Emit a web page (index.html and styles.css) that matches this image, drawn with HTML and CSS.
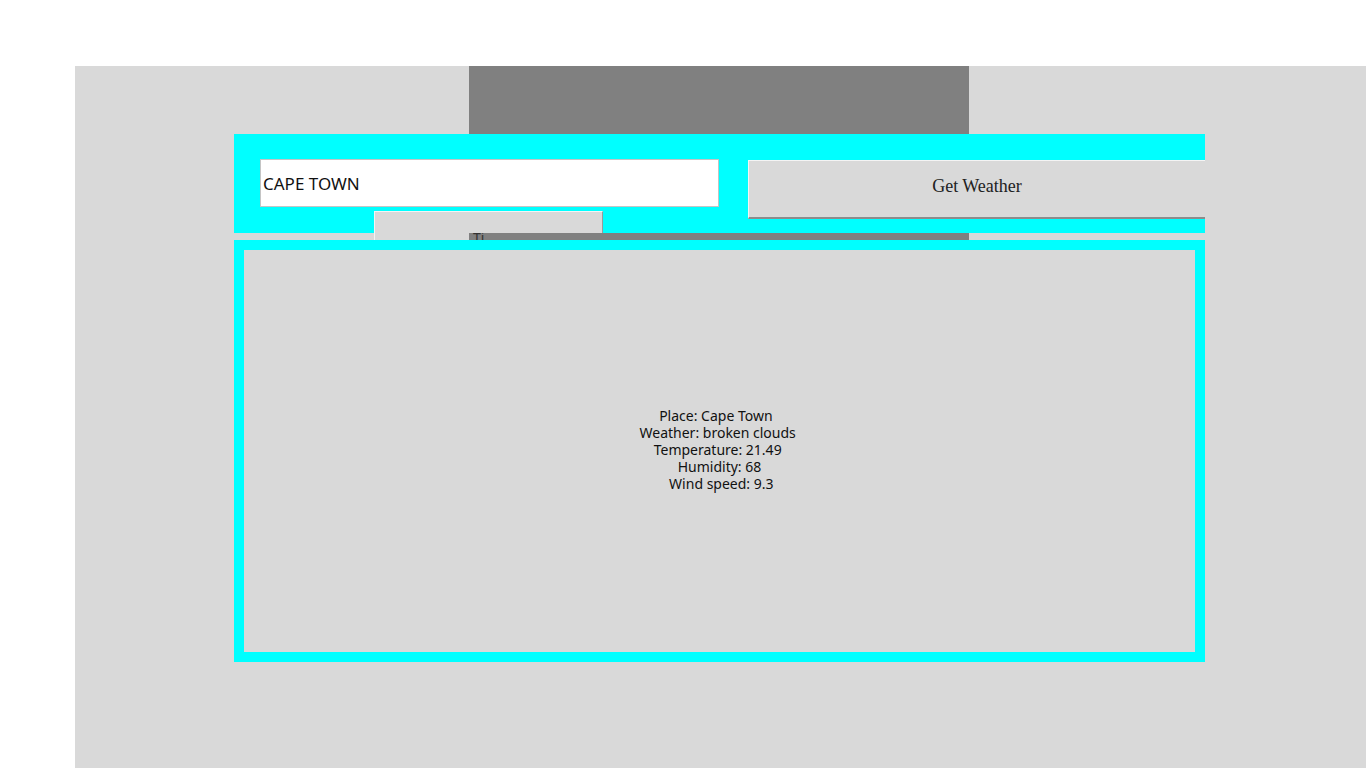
FILE: index.html
```html
<!DOCTYPE html>
<html lang="en">
<head>
  <meta charset="UTF-8" />
  <title>Weather App</title>
  <link rel="stylesheet" href="styles.css">
</head>
<body>

  <div class="window">
    <!-- top part: widgets stacked over each other -->
    <div class="stack">
      <div class="dark-block"></div>

      <div class="search-frame">
        <input type="text" class="city-entry" value="CAPE TOWN" />
        <button class="get-btn">Get Weather</button>
      </div>

      <div class="hidden-btn"></div>

      <div class="dark-strip"><span>Ti</span></div>
    </div>

    <!-- results -->
    <div class="result-frame">
      <div class="result-text">Place: Cape Town  
Weather: broken clouds 
Temperature: 21.49 
Humidity: 68
 Wind speed: 9.3</div>
    </div>
  </div>

</body>
</html>
```

FILE: styles.css
```css
body {
  margin: 0;
  background: #fff;
  font-family: "Noto Sans", sans-serif;
  color: #111;
}
.window {
  margin: 66px 0 0 75px;
  height: 702px;
  background: #d9d9d9;
  overflow: hidden;
}
.stack {
  display: grid;
}
.stack > div {
  grid-area: 1 / 1;
  align-self: start;
  justify-self: start;
  box-sizing: border-box;
}
.dark-block {
  margin-left: 394px;
  width: 500px;
  height: 174px;
  background: #808080;
}
.search-frame {
  margin: 68px 0 0 159px;
  width: 971px;
  height: 99px;
  background: #00ffff;
  display: flex;
  align-items: flex-start;
  gap: 29px;
  padding: 25px 0 0 26px;
  overflow: hidden;
}
.city-entry {
  box-sizing: border-box;
  width: 459px;
  height: 48px;
  margin: 0;
  padding: 0 0 0 2px;
  border: 1px solid #c4c4c4;
  background: #fff;
  font-family: "Noto Sans", sans-serif;
  font-size: 17px;
  color: #111;
  outline: none;
}
.get-btn {
  box-sizing: border-box;
  flex: none;
  width: 457px;
  height: 59px;
  margin-top: 1px;
  padding: 0 0 6px;
  background: #d9d9d9;
  border: none;
  border-top: 1px solid #f4f4f4;
  border-left: 1px solid #f4f4f4;
  border-bottom: 2px solid #8c8c8c;
  font-family: "Liberation Serif", serif;
  font-size: 18px;
  color: #222;
}
.hidden-btn {
  margin: 145px 0 0 299px;
  width: 229px;
  height: 29px;
  background: #d9d9d9;
  border-top: 1px solid #f4f4f4;
  border-left: 1px solid #f4f4f4;
  border-right: 1px solid #9a9a9a;
}
.dark-strip {
  margin: 167px 0 0 394px;
  width: 500px;
  height: 7px;
  background: #808080;
  overflow: hidden;
  font-size: 14px;
  line-height: 14px;
  color: #333;
}
.dark-strip span {
  display: block;
  margin: -2px 0 0 4px;
}
.result-frame {
  box-sizing: border-box;
  margin-left: 159px;
  width: 971px;
  height: 422px;
  border: 10px solid #00ffff;
  background: #d9d9d9;
  display: flex;
  align-items: center;
  justify-content: center;
}
.result-text {
  font-size: 14px;
  line-height: 17px;
  text-align: center;
  white-space: pre;
  margin-top: -3px;
}
```
